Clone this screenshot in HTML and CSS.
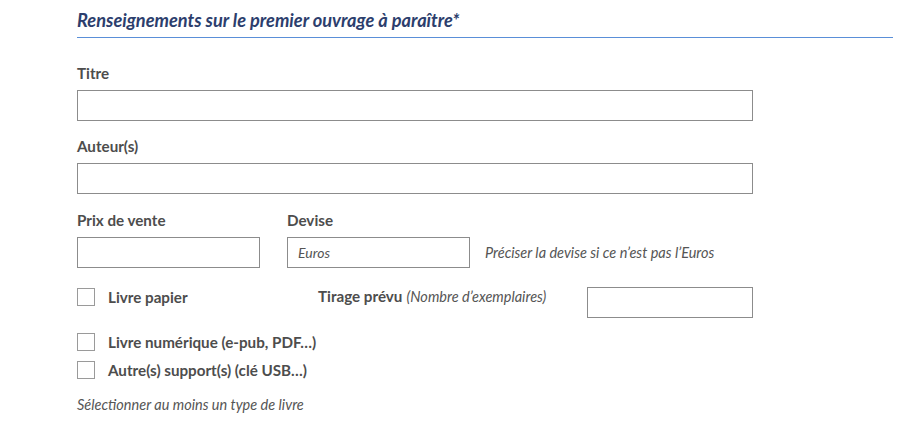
FILE: index.html
```html
<!DOCTYPE html>
<html lang="fr">
<head>
<meta charset="utf-8">
<link rel="stylesheet" href="styles.css">
</head>
<body>
<section class="section">
  <h2 class="section-title">Renseignements sur le premier ouvrage à paraître*</h2>

  <div class="field first">
    <label class="label">Titre</label>
    <div class="input wide"></div>
  </div>

  <div class="field">
    <label class="label">Auteur(s)</label>
    <div class="input wide"></div>
  </div>

  <div class="row price-row">
    <div class="field col">
      <label class="label">Prix de vente</label>
      <div class="input small"></div>
    </div>
    <div class="field col">
      <label class="label">Devise</label>
      <div class="input small"><span class="value">Euros</span></div>
    </div>
    <p class="help">Préciser la devise si ce n’est pas l’Euros</p>
  </div>

  <div class="row print-row">
    <div class="check paper">
      <span class="box"></span>
      <span class="check-label">Livre papier</span>
    </div>
    <div class="tirage">
      <span class="label inline">Tirage prévu</span> <span class="hint">(Nombre d’exemplaires)</span>
    </div>
    <div class="input tirage-input"></div>
  </div>

  <div class="checks">
    <div class="check">
      <span class="box"></span>
      <span class="check-label">Livre numérique (e-pub, PDF…)</span>
    </div>
    <div class="check">
      <span class="box"></span>
      <span class="check-label">Autre(s) support(s) (clé USB…)</span>
    </div>
  </div>

  <p class="note">Sélectionner au moins un type de livre</p>
</section>
</body>
</html>
```

FILE: styles.css
```css
html, body {
  margin: 0;
  padding: 0;
  background: #ffffff;
}
body {
  font-family: Lato, "Open Sans", sans-serif;
  color: #4a4a4a;
}
.section {
  padding: 0 23px 0 77px;
}
.section-title {
  margin: 0;
  padding: 9px 0 6px;
  font-size: 18.2px;
  line-height: 22px;
  font-weight: 700;
  font-style: italic;
  color: #2c3e6d;
  border-bottom: 1px solid #5a8fd8;
}
.field {
  display: flex;
  flex-direction: column;
  gap: 8px;
  margin-top: 16px;
}
.field.first {
  margin-top: 26px;
}
.label {
  display: block;
  font-size: 15.2px;
  line-height: 18px;
  font-weight: 700;
  color: #4d4d4d;
}
.label.inline {
  display: inline;
}
.input {
  box-sizing: border-box;
  height: 31px;
  border: 1px solid #8c8c8c;
  background: #fff;
  display: flex;
  align-items: center;
}
.input.wide {
  width: 676px;
}
.input.small {
  width: 183px;
}
.value {
  padding-left: 10px;
  font-size: 14px;
  font-style: italic;
  color: #555;
}
.row {
  display: flex;
}
.price-row {
  gap: 27px;
  align-items: flex-end;
  margin-top: 17px;
}
.price-row .field {
  margin-top: 0;
}
.help {
  margin: 0 0 0 -12px;
  height: 31px;
  display: flex;
  align-items: center;
  font-size: 14.5px;
  font-style: italic;
  color: #555;
}
.print-row {
  margin-top: 19px;
  align-items: flex-start;
}
.check {
  display: flex;
  align-items: center;
  gap: 13px;
  height: 18px;
}
.check.paper {
  width: 241px;
  margin-top: 1px;
}
.box {
  box-sizing: border-box;
  width: 18px;
  height: 18px;
  border: 1px solid #9a9a9a;
  background: #fff;
  flex: none;
}
.check-label {
  font-size: 15.2px;
  font-weight: 700;
  color: #4d4d4d;
}
.tirage {
  width: 269px;
  line-height: 18px;
}
.hint {
  font-size: 14.5px;
  font-style: italic;
  color: #555;
}
.input.tirage-input {
  width: 166px;
}
.checks {
  margin-top: 15px;
  display: flex;
  flex-direction: column;
  gap: 10px;
}
.note {
  margin: 18px 0 0;
  font-size: 14.5px;
  line-height: 16px;
  font-style: italic;
  color: #555;
}
```
